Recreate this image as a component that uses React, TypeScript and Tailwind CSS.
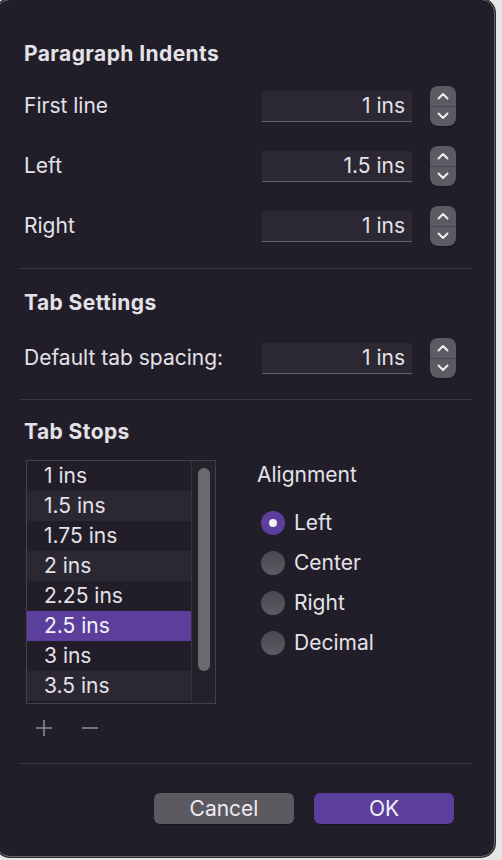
import { type ReactNode } from 'react'

const font = { fontFamily: 'Inter, "Noto Sans", sans-serif' }

function Stepper() {
  return (
    <div className="flex h-[40px] w-[26px] flex-col overflow-hidden rounded-[8px] bg-[#5d5a63] shadow-[0_1px_1px_rgba(0,0,0,0.4)]">
      <div className="flex flex-1 items-center justify-center border-b border-[#47444d]">
        <svg width="12" height="8" viewBox="0 0 12 8" fill="none">
          <path d="M1.5 6.5 6 2l4.5 4.5" stroke="#f0eef3" strokeWidth="2" strokeLinecap="round" strokeLinejoin="round" />
        </svg>
      </div>
      <div className="flex flex-1 items-center justify-center">
        <svg width="12" height="8" viewBox="0 0 12 8" fill="none">
          <path d="M1.5 1.5 6 6l4.5-4.5" stroke="#f0eef3" strokeWidth="2" strokeLinecap="round" strokeLinejoin="round" />
        </svg>
      </div>
    </div>
  )
}

function Field({ label, value }: { label: string; value: string }) {
  return (
    <div className="flex h-[60px] items-center">
      <span className="w-[238px] text-[21px] leading-[28px] text-[#e4e2e8]">{label}</span>
      <div className="flex h-[31px] w-[150px] items-center justify-end border-b border-[#66626c] bg-[#2c2833] pr-[7px] text-[21px] leading-[28px] text-[#e4e2e8]">
        {value}
      </div>
      <div className="ml-[18px]">
        <Stepper />
      </div>
    </div>
  )
}

function Heading({ children }: { children: ReactNode }) {
  return <h2 className="text-[21px] font-bold leading-[28px] tracking-[0.02em] text-[#e4e2e8]">{children}</h2>
}

function Radio({ label, checked }: { label: string; checked?: boolean }) {
  return (
    <div className="flex h-[40px] items-center gap-[9px]">
      {checked ? (
        <span className="flex h-[24px] w-[24px] items-center justify-center rounded-full bg-[#5c3f9c]">
          <span className="h-[8px] w-[8px] rounded-full bg-[#f2f0f5]" />
        </span>
      ) : (
        <span className="h-[24px] w-[24px] rounded-full bg-gradient-to-b from-[#4a4750] to-[#5e5b63]" />
      )}
      <span className="text-[21px] leading-[28px] text-[#e4e2e8]">{label}</span>
    </div>
  )
}

const stops = ['1 ins', '1.5 ins', '1.75 ins', '2 ins', '2.25 ins', '2.5 ins', '3 ins', '3.5 ins']

export default function App() {
  return (
    <div className="relative h-[860px] w-[502px] overflow-hidden bg-[#e6e6e6]" style={font}>
      <div className="relative -ml-[4px] -mt-[1px] flex h-[858px] w-[499px] flex-col rounded-[14px] border border-[#67646c] bg-[#221e29] px-[23px] shadow-[0_0_0_1px_#2a282d]">
        <div className="pl-[4px] pt-[40px]">
          <Heading>Paragraph Indents</Heading>
        </div>
        <div className="mt-[8px] pl-[4px]">
          <Field label="First line" value="1 ins" />
          <Field label="Left" value="1.5 ins" />
          <Field label="Right" value="1 ins" />
        </div>

        <div className="mt-[12px] h-px bg-[#3c3843]" />

        <div className="mt-[20px] pl-[4px]">
          <Heading>Tab Settings</Heading>
        </div>
        <div className="mt-[11px] pl-[4px]">
          <Field label="Default tab spacing:" value="1 ins" />
        </div>

        <div className="mt-[11px] h-px bg-[#3c3843]" />

        <div className="mt-[18px] pl-[4px]">
          <Heading>Tab Stops</Heading>
        </div>

        <div className="mt-[14px] flex pl-[6px]">
          <div>
            <div className="flex h-[244px] w-[190px] border border-[#45414b] bg-[#201c26]">
              <div className="flex w-[164px] flex-col">
                {stops.map((s, i) => (
                  <div
                    key={s}
                    className={
                      i === 5
                        ? 'flex h-[30px] items-center bg-[#5c3f9c] pl-[17px] text-[21px] text-[#f4f2f7]'
                        : i % 2 === 1
                          ? 'flex h-[30px] items-center bg-[#2c2833] pl-[17px] text-[21px] text-[#e4e2e8]'
                          : 'flex h-[30px] items-center bg-[#221e29] pl-[17px] text-[21px] text-[#e4e2e8]'
                    }
                  >
                    {s}
                  </div>
                ))}
              </div>
              <div className="flex flex-1 justify-center border-l border-[#37333d] bg-[#25212b] pt-[7px]">
                <div className="h-[203px] w-[12px] rounded-full bg-[#6c6970]" />
              </div>
            </div>
            <div className="mt-[14px] flex items-center gap-[26px] pl-[8px] text-[#8b8891]">
              <svg width="20" height="20" viewBox="0 0 20 20" fill="none">
                <path d="M10 2v16M2 10h16" stroke="currentColor" strokeWidth="1.6" />
              </svg>
              <svg width="20" height="20" viewBox="0 0 20 20" fill="none">
                <path d="M2 10h16" stroke="currentColor" strokeWidth="1.6" />
              </svg>
            </div>
          </div>

          <div className="ml-[41px] mt-[1px]">
            <p className="text-[21px] leading-[28px] text-[#e4e2e8]">Alignment</p>
            <div className="mt-[14px] pl-[4px]">
              <Radio label="Left" checked />
              <Radio label="Center" />
              <Radio label="Right" />
              <Radio label="Decimal" />
            </div>
          </div>
        </div>

        <div className="mt-[25px] h-px bg-[#3c3843]" />

        <div className="mt-[29px] flex justify-end gap-[20px] pr-[17px]">
          <button className="h-[31px] w-[140px] rounded-[6px] bg-[#5c5960] text-[21px] leading-[28px] text-[#eceaf0] shadow-[0_1px_1px_rgba(0,0,0,0.35)]">
            Cancel
          </button>
          <button className="h-[31px] w-[140px] rounded-[6px] bg-[#5c3f9c] text-[21px] leading-[28px] text-[#f2f0f5] shadow-[0_1px_1px_rgba(0,0,0,0.35)]">
            OK
          </button>
        </div>
      </div>
    </div>
  )
}
